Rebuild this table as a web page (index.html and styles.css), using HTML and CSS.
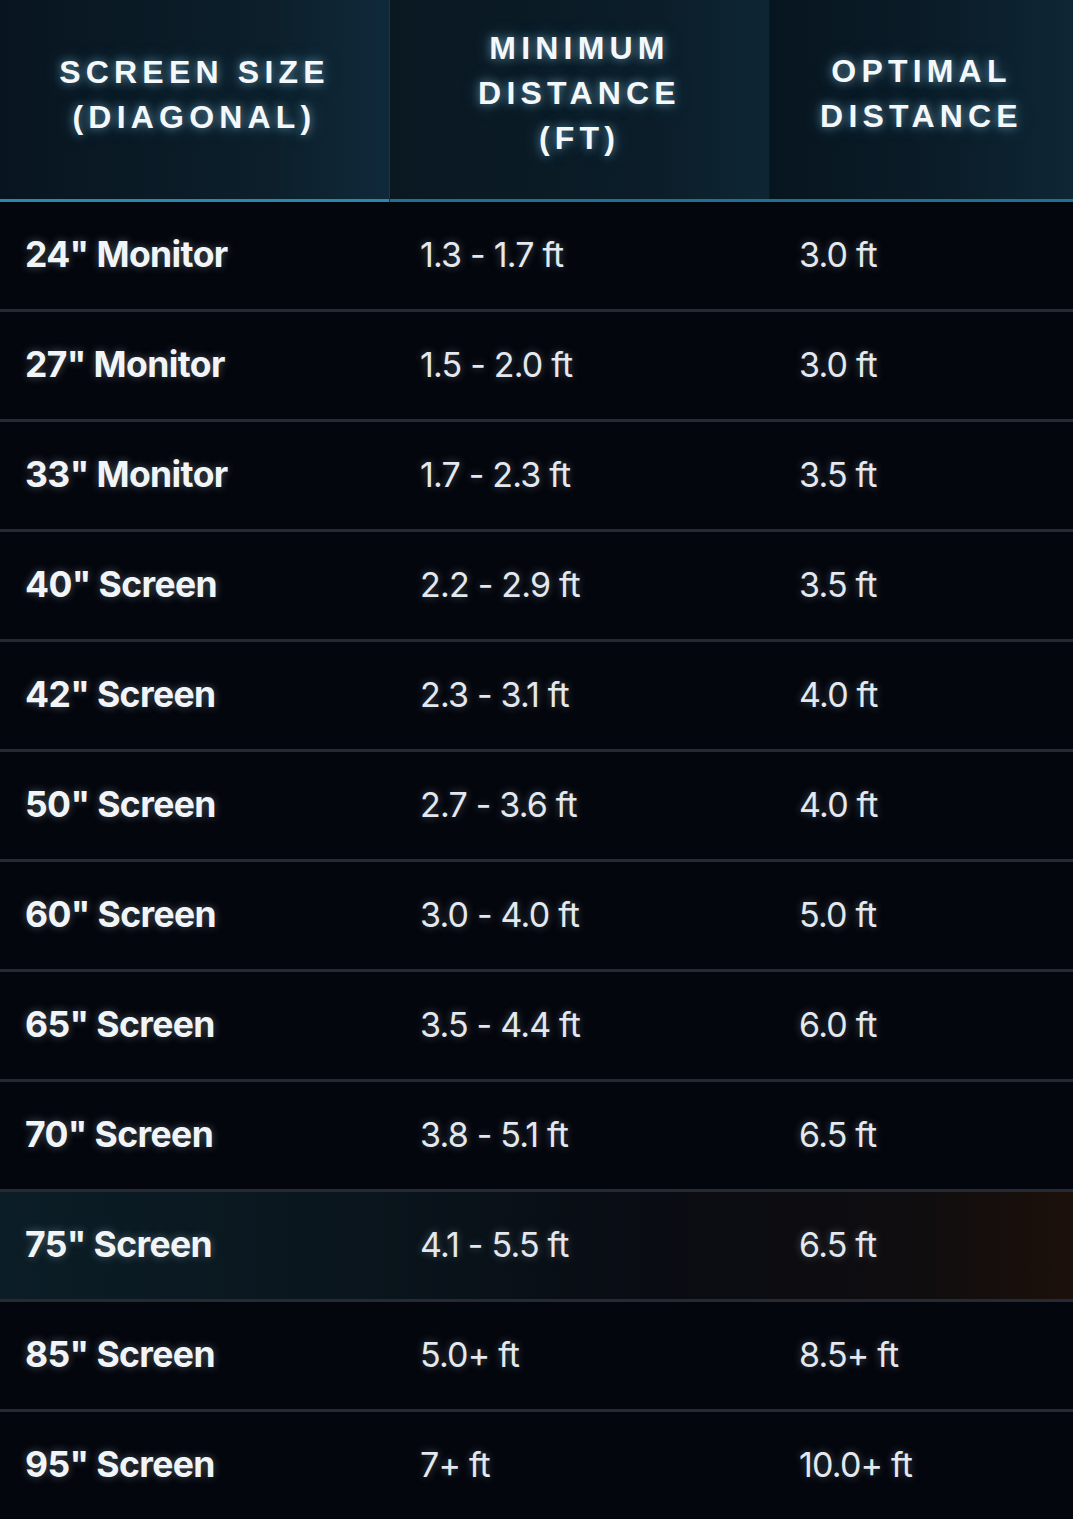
FILE: index.html
```html
<!DOCTYPE html>
<html>
<head>
<meta charset="utf-8">
<link rel="stylesheet" href="styles.css">
</head>
<body>
<div class="table">
  <div class="head">
    <div class="hcell h1"><span>SCREEN SIZE<br>(DIAGONAL)</span></div>
    <div class="hcell h2"><span>MINIMUM<br>DISTANCE<br>(FT)</span></div>
    <div class="hcell h3"><span>OPTIMAL<br>DISTANCE</span></div>
  </div>
  <div class="row"><div class="c1">24" Monitor</div><div class="c2">1.3 - 1.7 ft</div><div class="c3">3.0 ft</div></div>
  <div class="row"><div class="c1">27" Monitor</div><div class="c2">1.5 - 2.0 ft</div><div class="c3">3.0 ft</div></div>
  <div class="row"><div class="c1">33" Monitor</div><div class="c2">1.7 - 2.3 ft</div><div class="c3">3.5 ft</div></div>
  <div class="row"><div class="c1">40" Screen</div><div class="c2">2.2 - 2.9 ft</div><div class="c3">3.5 ft</div></div>
  <div class="row"><div class="c1">42" Screen</div><div class="c2">2.3 - 3.1 ft</div><div class="c3">4.0 ft</div></div>
  <div class="row"><div class="c1">50" Screen</div><div class="c2">2.7 - 3.6 ft</div><div class="c3">4.0 ft</div></div>
  <div class="row"><div class="c1">60" Screen</div><div class="c2">3.0 - 4.0 ft</div><div class="c3">5.0 ft</div></div>
  <div class="row"><div class="c1">65" Screen</div><div class="c2">3.5 - 4.4 ft</div><div class="c3">6.0 ft</div></div>
  <div class="row"><div class="c1">70" Screen</div><div class="c2">3.8 - 5.1 ft</div><div class="c3">6.5 ft</div></div>
  <div class="row hl"><div class="c1">75" Screen</div><div class="c2">4.1 - 5.5 ft</div><div class="c3">6.5 ft</div></div>
  <div class="row"><div class="c1">85" Screen</div><div class="c2">5.0+ ft</div><div class="c3">8.5+ ft</div></div>
  <div class="row last"><div class="c1">95" Screen</div><div class="c2">7+ ft</div><div class="c3">10.0+ ft</div></div>
</div>
</body>
</html>
```

FILE: styles.css
```css
html, body {
  margin: 0;
  padding: 0;
  background: #04060d;
}
.table {
  width: 1073px;
  display: flex;
  flex-direction: column;
}
.head {
  display: grid;
  grid-template-columns: 390px 379px 1fr;
  height: 199px;
  border-bottom: 3px solid #20718f;
}
.hcell {
  display: flex;
  align-items: center;
  justify-content: center;
  padding-bottom: 12px;
  box-sizing: border-box;
  font-family: "Liberation Sans", Arial, sans-serif;
  font-weight: bold;
  font-size: 32px;
  line-height: 45px;
  letter-spacing: 5.2px;
  color: #f4f8fa;
  text-align: center;
  text-shadow: 0 0 8px rgba(140, 200, 230, 0.55), 0 0 18px rgba(120, 190, 220, 0.35);
}
.h1 {
  background: linear-gradient(90deg, #081520 0%, #0c1f2b 70%, #10293a 100%);
  border-right: 1px solid #14394b;
  margin-bottom: -3px;
  height: 202px;
  box-shadow: inset 0 -3px 0 #2b88ad;
}
.h2 {
  background: linear-gradient(90deg, #0a1822 0%, #0b1d29 70%, #0e2634 100%);
}
.h3 {
  background: linear-gradient(90deg, #071520 0%, #0b1d29 60%, #0e2635 100%);
  border-left: 1px solid #0a1a24;
}
.row {
  display: grid;
  grid-template-columns: 390px 379px 1fr;
  height: 107px;
  padding-bottom: 3px;
  box-sizing: content-box;
  align-items: center;
  border-bottom: 3px solid #262a33;
  font-family: Inter, "Noto Sans", sans-serif;
  font-size: 34px;
  color: #f2f5f8;
  letter-spacing: -0.8px;
  text-shadow: 0 0 8px rgba(200, 225, 240, 0.35);
}
.row {
  height: 104px;
}
.row.last {
  border-bottom: none;
}
.c1 {
  font-weight: 700;
  font-size: 35.5px;
  letter-spacing: -0.6px;
  padding-left: 25px;
}
.c2 {
  font-weight: 400;
  padding-left: 30px;
  color: #e4e9ef;
}
.c3 {
  font-weight: 400;
  padding-left: 30px;
  color: #e4e9ef;
}
.hl {
  background: linear-gradient(90deg, #0b1d26 0%, #0a161e 30%, #090c13 60%, #0f0d0f 85%, #1c100a 100%);
}
```
